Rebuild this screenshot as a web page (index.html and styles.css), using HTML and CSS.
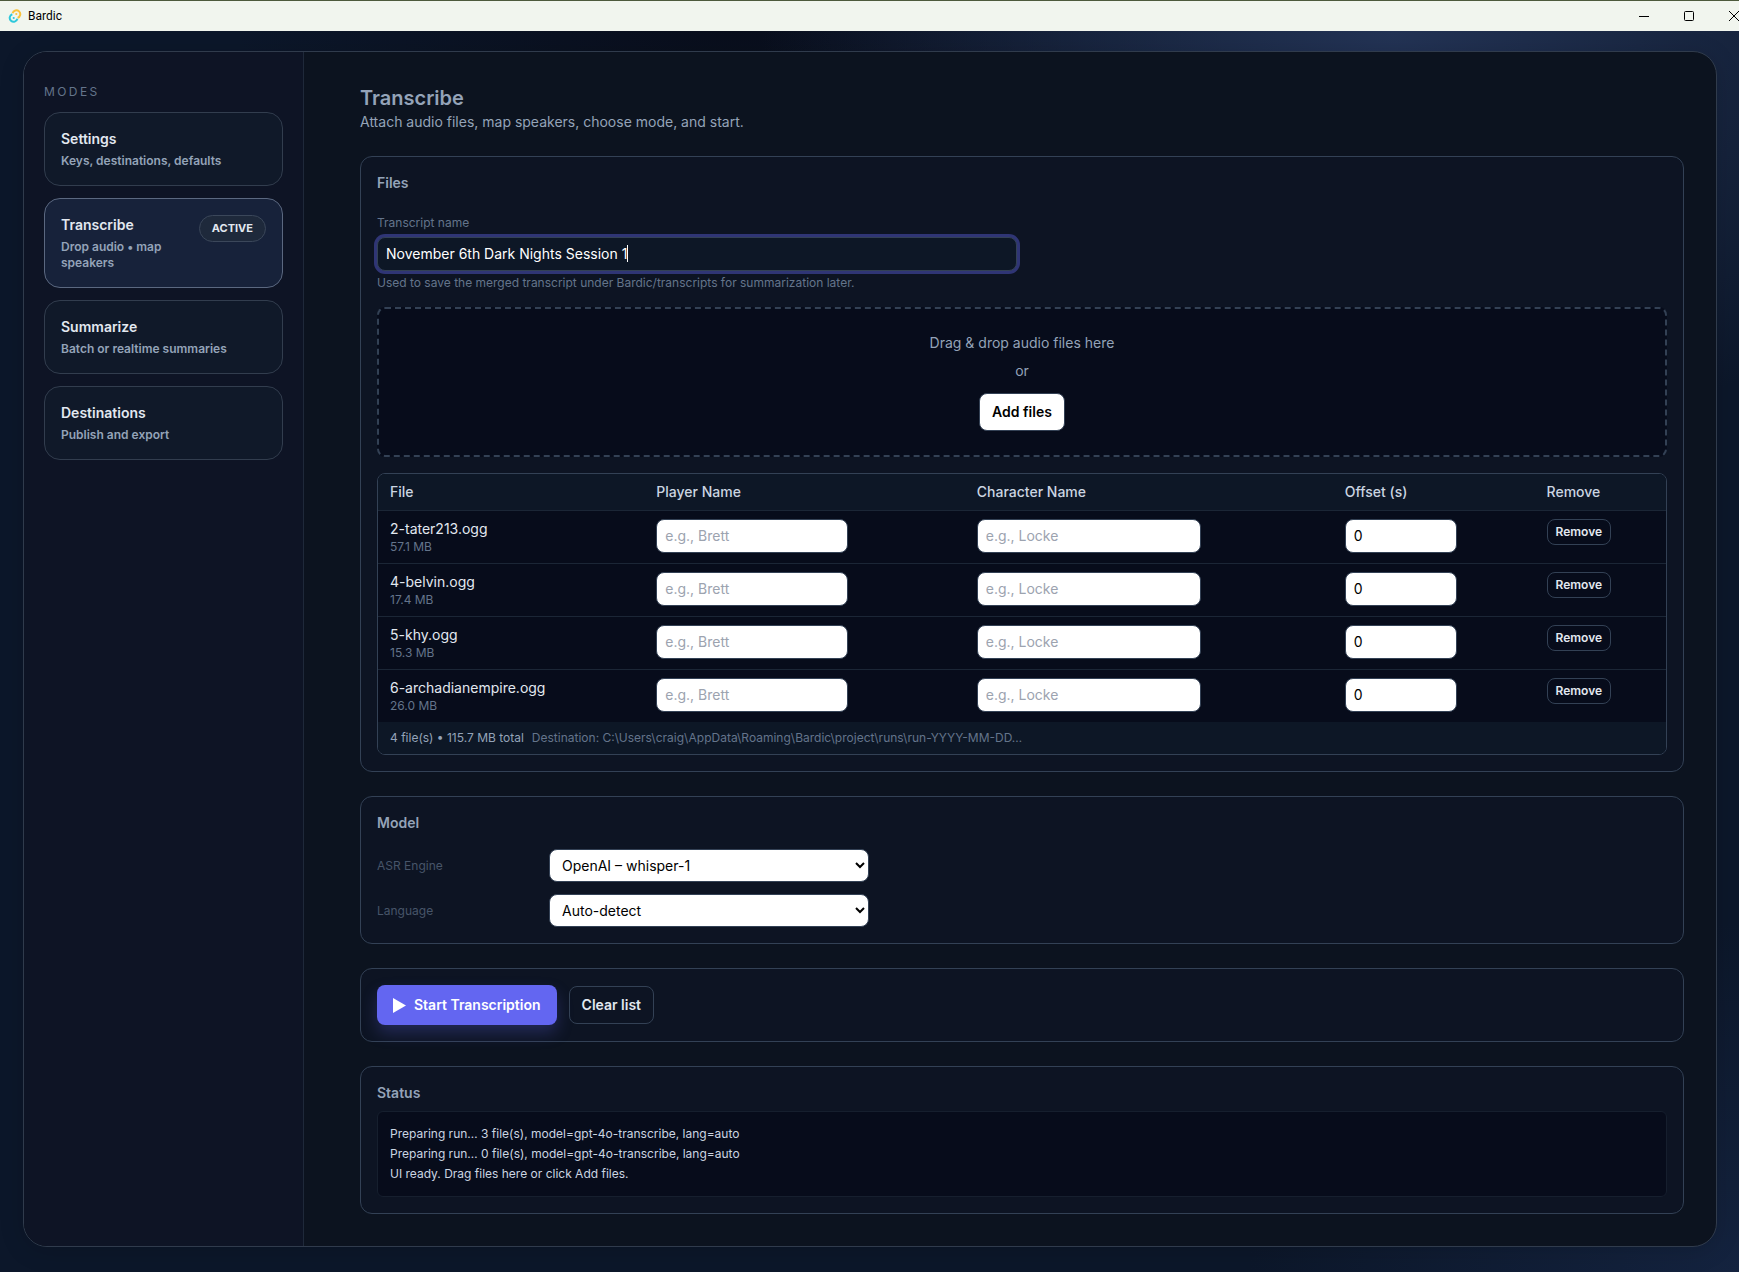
FILE: index.html
```
<!DOCTYPE html>
<html lang="en">
<head>
    <meta charset="UTF-8">
    <meta name="viewport" content="width=device-width, initial-scale=1.0">
    <title>Bardic</title>
    <link rel="stylesheet" href="styles.css">
</head>
<body>
    <header class="titlebar">
        <svg class="logo" viewBox="0 0 14 14" fill="none" stroke-width="2">
            <path d="M4.6 4.2A3.9 3.9 0 1 1 9.6 8.9" stroke="#f9c23c"/>
            <path d="M4.3 5.2A3.9 3.9 0 1 0 9.4 9.8" stroke="#2ec8db"/>
            <circle cx="8.3" cy="5" r="1.1" fill="#f9c23c"/>
            <circle cx="5.7" cy="9" r="1.1" fill="#2ec8db"/>
        </svg>
        <span class="titlebar-name">Bardic</span>
        <div class="window-controls">
            <button type="button" aria-label="Minimize"><svg viewBox="0 0 12 12"><path d="M1 6.5h10"/></svg></button>
            <button type="button" aria-label="Maximize"><svg viewBox="0 0 12 12"><rect x="1.5" y="1.5" width="9" height="9" rx="1"/></svg></button>
            <button type="button" aria-label="Close"><svg viewBox="0 0 12 12"><path d="M1 1l10 10M11 1L1 11"/></svg></button>
        </div>
    </header>

    <div class="app">
        <div class="shell">
            <nav class="sidebar">
                <div class="sidebar-title">Modes</div>
                <button type="button" class="mode">
                    <span class="mode-text">
                        <span class="mode-name">Settings</span>
                        <span class="mode-desc">Keys, destinations, defaults</span>
                    </span>
                </button>
                <button type="button" class="mode active">
                    <span class="mode-text">
                        <span class="mode-name">Transcribe</span>
                        <span class="mode-desc">Drop audio • map speakers</span>
                    </span>
                    <span class="pill">ACTIVE</span>
                </button>
                <button type="button" class="mode">
                    <span class="mode-text">
                        <span class="mode-name">Summarize</span>
                        <span class="mode-desc">Batch or realtime summaries</span>
                    </span>
                </button>
                <button type="button" class="mode">
                    <span class="mode-text">
                        <span class="mode-name">Destinations</span>
                        <span class="mode-desc">Publish and export</span>
                    </span>
                </button>
            </nav>

            <main class="content">
                <div class="page-head">
                    <h1>Transcribe</h1>
                    <p>Attach audio files, map speakers, choose mode, and start.</p>
                </div>

                <section class="card">
                    <h2>Files</h2>
                    <div class="field">
                        <label for="transcriptName">Transcript name</label>
                        <div class="name-box">
                            <input type="text" id="transcriptName" value="November 6th Dark Nights Session 1" aria-describedby="nameHint" autofocus>
                            <span class="caret"></span>
                        </div>
                        <small id="nameHint">Used to save the merged transcript under Bardic/transcripts for summarization later.</small>
                    </div>

                    <div class="dropzone">
                        <p>Drag &amp; drop audio files here</p>
                        <p>or</p>
                        <button type="button" class="btn btn-light">Add files</button>
                    </div>

                    <div class="table-wrap">
                        <table>
                            <thead>
                                <tr>
                                    <th>File</th>
                                    <th>Player Name</th>
                                    <th>Character Name</th>
                                    <th>Offset (s)</th>
                                    <th>Remove</th>
                                </tr>
                            </thead>
                            <tbody>
                                <tr>
                                    <td><div class="file-name">2-tater213.ogg</div><div class="file-size">57.1 MB</div></td>
                                    <td><input type="text" class="player" placeholder="e.g., Brett" aria-label="Player name"></td>
                                    <td><input type="text" class="character" placeholder="e.g., Locke" aria-label="Character name"></td>
                                    <td><input type="number" class="offset" value="0" aria-label="Offset in seconds"></td>
                                    <td><button type="button" class="btn btn-small">Remove</button></td>
                                </tr>
                                <tr>
                                    <td><div class="file-name">4-belvin.ogg</div><div class="file-size">17.4 MB</div></td>
                                    <td><input type="text" class="player" placeholder="e.g., Brett" aria-label="Player name"></td>
                                    <td><input type="text" class="character" placeholder="e.g., Locke" aria-label="Character name"></td>
                                    <td><input type="number" class="offset" value="0" aria-label="Offset in seconds"></td>
                                    <td><button type="button" class="btn btn-small">Remove</button></td>
                                </tr>
                                <tr>
                                    <td><div class="file-name">5-khy.ogg</div><div class="file-size">15.3 MB</div></td>
                                    <td><input type="text" class="player" placeholder="e.g., Brett" aria-label="Player name"></td>
                                    <td><input type="text" class="character" placeholder="e.g., Locke" aria-label="Character name"></td>
                                    <td><input type="number" class="offset" value="0" aria-label="Offset in seconds"></td>
                                    <td><button type="button" class="btn btn-small">Remove</button></td>
                                </tr>
                                <tr>
                                    <td><div class="file-name">6-archadianempire.ogg</div><div class="file-size">26.0 MB</div></td>
                                    <td><input type="text" class="player" placeholder="e.g., Brett" aria-label="Player name"></td>
                                    <td><input type="text" class="character" placeholder="e.g., Locke" aria-label="Character name"></td>
                                    <td><input type="number" class="offset" value="0" aria-label="Offset in seconds"></td>
                                    <td><button type="button" class="btn btn-small">Remove</button></td>
                                </tr>
                            </tbody>
                        </table>
                        <div class="table-foot">
                            <span class="totals">4 file(s) • 115.7 MB total</span>
                            <span>Destination: C:\Users\craig\AppData\Roaming\Bardic\project\runs\run-YYYY-MM-DD…</span>
                        </div>
                    </div>
                </section>

                <section class="card">
                    <h2>Model</h2>
                    <div class="model-grid">
                        <label for="engine">ASR Engine</label>
                        <select id="engine">
                            <option>OpenAI – whisper-1</option>
                        </select>
                        <label for="language">Language</label>
                        <select id="language">
                            <option>Auto-detect</option>
                        </select>
                    </div>
                </section>

                <section class="card actions">
                    <button type="button" class="btn btn-primary">
                        <svg viewBox="0 0 14 16"><path d="M0 0l14 8L0 16z" fill="#fff"/></svg>
                        Start Transcription
                    </button>
                    <button type="button" class="btn">Clear list</button>
                </section>

                <section class="card">
                    <h2>Status</h2>
                    <div class="log" role="log">
                        <div>Preparing run… 3 file(s), model=gpt-4o-transcribe, lang=auto</div>
                        <div>Preparing run… 0 file(s), model=gpt-4o-transcribe, lang=auto</div>
                        <div>UI ready. Drag files here or click Add files.</div>
                    </div>
                </section>
            </main>
        </div>
    </div>

    <script>
        document.getElementById('transcriptName').focus();
    </script>
</body>
</html>
```

FILE: styles.css
```
:root {
    --bg: #0c172a;
    --shell: #0c131f;
    --sidebar: #0e1425;
    --card: #0d1423;
    --inset: #070c1b;
    --raised: #0d1726;
    --border: #334155;
    --border-soft: #1b2636;
    --text: #e2e8f0;
    --text-soft: #cbd5e1;
    --muted: #94a3b8;
    --dim: #64748b;
    --accent: #6366f1;
}
* {
    box-sizing: border-box;
}
body {
    margin: 0;
    min-height: 100vh;
    display: flex;
    flex-direction: column;
    font-family: Inter, 'Segoe UI', sans-serif;
    font-size: 14px;
    line-height: 20px;
    color: var(--text);
    background-color: var(--bg);
}
h1, h2, p {
    margin: 0;
}
button, input, select {
    font: inherit;
}

/* Window title bar */
.titlebar {
    display: flex;
    align-items: center;
    height: 31px;
    padding: 0 0 1px 8px;
    background-color: #f1f5ee;
    border-top: 1px solid #4d5a3c;
    overflow: hidden;
}
.logo {
    width: 14px;
    height: 14px;
}
.titlebar-name {
    margin-left: 6px;
    font-family: Roboto, 'Segoe UI', sans-serif;
    font-size: 12px;
    color: #000;
}
.window-controls {
    display: flex;
    margin-left: auto;
    margin-right: -17px;
}
.window-controls button {
    width: 45px;
    height: 29px;
    padding: 0;
    border: none;
    background: none;
    display: flex;
    align-items: center;
    justify-content: center;
}
.window-controls svg {
    width: 12px;
    height: 12px;
    fill: none;
    stroke: #000;
}

/* Layout */
.app {
    flex: 1;
    display: flex;
    padding: 20px 22px 25px 23px;
    background:
        radial-gradient(900px 600px at 80% 0, #233355 0%, rgba(35, 51, 85, 0) 70%),
        radial-gradient(700px 500px at 100% 100%, #14233f 0%, rgba(20, 35, 63, 0) 70%),
        radial-gradient(500px 160px at 42% 0, #090e1c 0%, rgba(9, 14, 28, 0) 100%),
        var(--bg);
}
.shell {
    flex: 1;
    display: flex;
    border: 1px solid #303b4c;
    border-radius: 24px;
    background-color: var(--shell);
    overflow: hidden;
    box-shadow: 0 4px 24px rgba(0, 0, 0, 0.15);
}
.sidebar {
    flex: 0 0 280px;
    display: flex;
    flex-direction: column;
    gap: 12px;
    padding: 32px 20px;
    background-color: var(--sidebar);
    border-right: 1px solid #1f293a;
}
.sidebar-title {
    font-size: 12px;
    line-height: 16px;
    letter-spacing: 0.2em;
    text-transform: uppercase;
    color: var(--dim);
}
.mode {
    display: flex;
    align-items: flex-start;
    justify-content: space-between;
    gap: 8px;
    padding: 16px;
    border: 1px solid #323d4e;
    border-radius: 16px;
    background-color: #101929;
    color: var(--text);
    font-weight: 600;
    text-align: left;
}
.mode.active {
    border-color: #5b6880;
    background-color: #17223a;
}
.mode-name, .mode-desc {
    display: block;
}
.mode-desc {
    margin-top: 4px;
    font-size: 12px;
    line-height: 16px;
    color: var(--muted);
}
.pill {
    padding: 4px 12px;
    border: 1px solid #3b475a;
    border-radius: 20px;
    background-color: #1e293b;
    font-size: 11px;
    line-height: 17px;
    font-weight: 700;
}
.content {
    flex: 1;
    min-width: 0;
    display: flex;
    flex-direction: column;
    gap: 24px;
    padding: 32px 32px 32px 56px;
}
.page-head {
    color: var(--muted);
}
h1 {
    font-size: 20px;
    line-height: 28px;
    font-weight: 600;
}
h2 {
    font-size: 14px;
    line-height: 20px;
    font-weight: 600;
    color: var(--muted);
}
.card {
    padding: 16px;
    border: 1px solid var(--border);
    border-radius: 12px;
    background-color: var(--card);
}

/* Files */
.field {
    display: flex;
    flex-direction: column;
    gap: 4px;
    margin-top: 20px;
    max-width: 640px;
    color: var(--dim);
}
.field label, .field small {
    font-size: 12px;
}
.field small {
    line-height: 16px;
}
.name-box {
    position: relative;
    display: flex;
}
.field input {
    flex: 1;
    height: 34px;
    padding: 0 8px 2px;
    border: 1px solid var(--border);
    border-radius: 8px;
    background-color: var(--raised);
    color: #fff;
    caret-color: transparent;
    outline: none;
}
.field input:focus {
    box-shadow: 0 0 0 3px rgba(99, 102, 241, 0.4);
}
.caret {
    position: absolute;
    top: 8px;
    left: 250px;
    width: 1px;
    height: 17px;
    background-color: #fff;
}
.dropzone {
    display: flex;
    flex-direction: column;
    align-items: center;
    gap: 8px;
    margin: 16px 0;
    padding: 24px;
    border: 2px dashed var(--border);
    border-radius: 8px;
    background-color: var(--inset);
    color: var(--muted);
}
.dropzone .btn {
    margin-top: 4px;
}
.btn {
    height: 38px;
    padding: 0 12px;
    border: 1px solid var(--border);
    border-radius: 8px;
    background: none;
    color: var(--text);
    font-weight: 600;
    cursor: pointer;
}
.btn-light {
    background-color: #fff;
    color: #000;
}
.btn-small {
    height: 26px;
    padding: 0 8px;
    font-size: 12px;
    line-height: 16px;
}
.table-wrap {
    border: 1px solid var(--border);
    border-radius: 8px;
    background-color: var(--inset);
    overflow: hidden;
}
table {
    width: 100%;
    border-spacing: 0;
}
th, td {
    padding: 8px 12px;
    text-align: left;
    vertical-align: top;
    border-bottom: 1px solid var(--border-soft);
}
th {
    background-color: var(--raised);
    color: var(--text-soft);
    font-weight: 500;
}
tbody tr:last-child td {
    border-bottom: none;
}
td input, td .btn {
    display: block;
}
td input {
    height: 34px;
    padding: 0 8px 2px;
    border: 1px solid var(--border);
    border-radius: 8px;
    background-color: #fff;
    color: #000;
}
td input::placeholder {
    color: #9ca3af;
}
.player {
    width: 192px;
}
.character {
    width: 224px;
}
.offset {
    width: 112px;
}
.file-size {
    font-size: 12px;
    line-height: 16px;
    color: var(--dim);
}
.table-foot {
    display: flex;
    gap: 8px;
    padding: 8px 12px;
    background-color: var(--raised);
    font-size: 12px;
    line-height: 16px;
    color: var(--dim);
}
.totals {
    color: var(--muted);
}

/* Model */
.model-grid {
    display: grid;
    grid-template-columns: 160px 320px;
    gap: 12px;
    align-items: center;
    margin-top: 16px;
}
.model-grid label {
    font-size: 12px;
    color: #475569;
}
.model-grid select {
    height: 33px;
    padding: 0 8px;
    border: 1px solid var(--border);
    border-radius: 8px;
    background-color: #fff;
    color: #000;
}

/* Actions */
.actions {
    display: flex;
    align-items: center;
    gap: 12px;
}
.btn-primary {
    display: flex;
    align-items: center;
    gap: 8px;
    height: 40px;
    padding: 0 16px;
    border: none;
    background-color: var(--accent);
    color: #fff;
    box-shadow: 0 8px 16px rgba(99, 102, 241, 0.25);
}
.btn-primary svg {
    width: 13px;
    height: 15px;
}

/* Status */
.log {
    margin-top: 8px;
    padding: 12px;
    border: 1px solid #161f2e;
    border-radius: 6px;
    background-color: var(--inset);
    color: var(--text-soft);
    font-size: 12px;
}
```
